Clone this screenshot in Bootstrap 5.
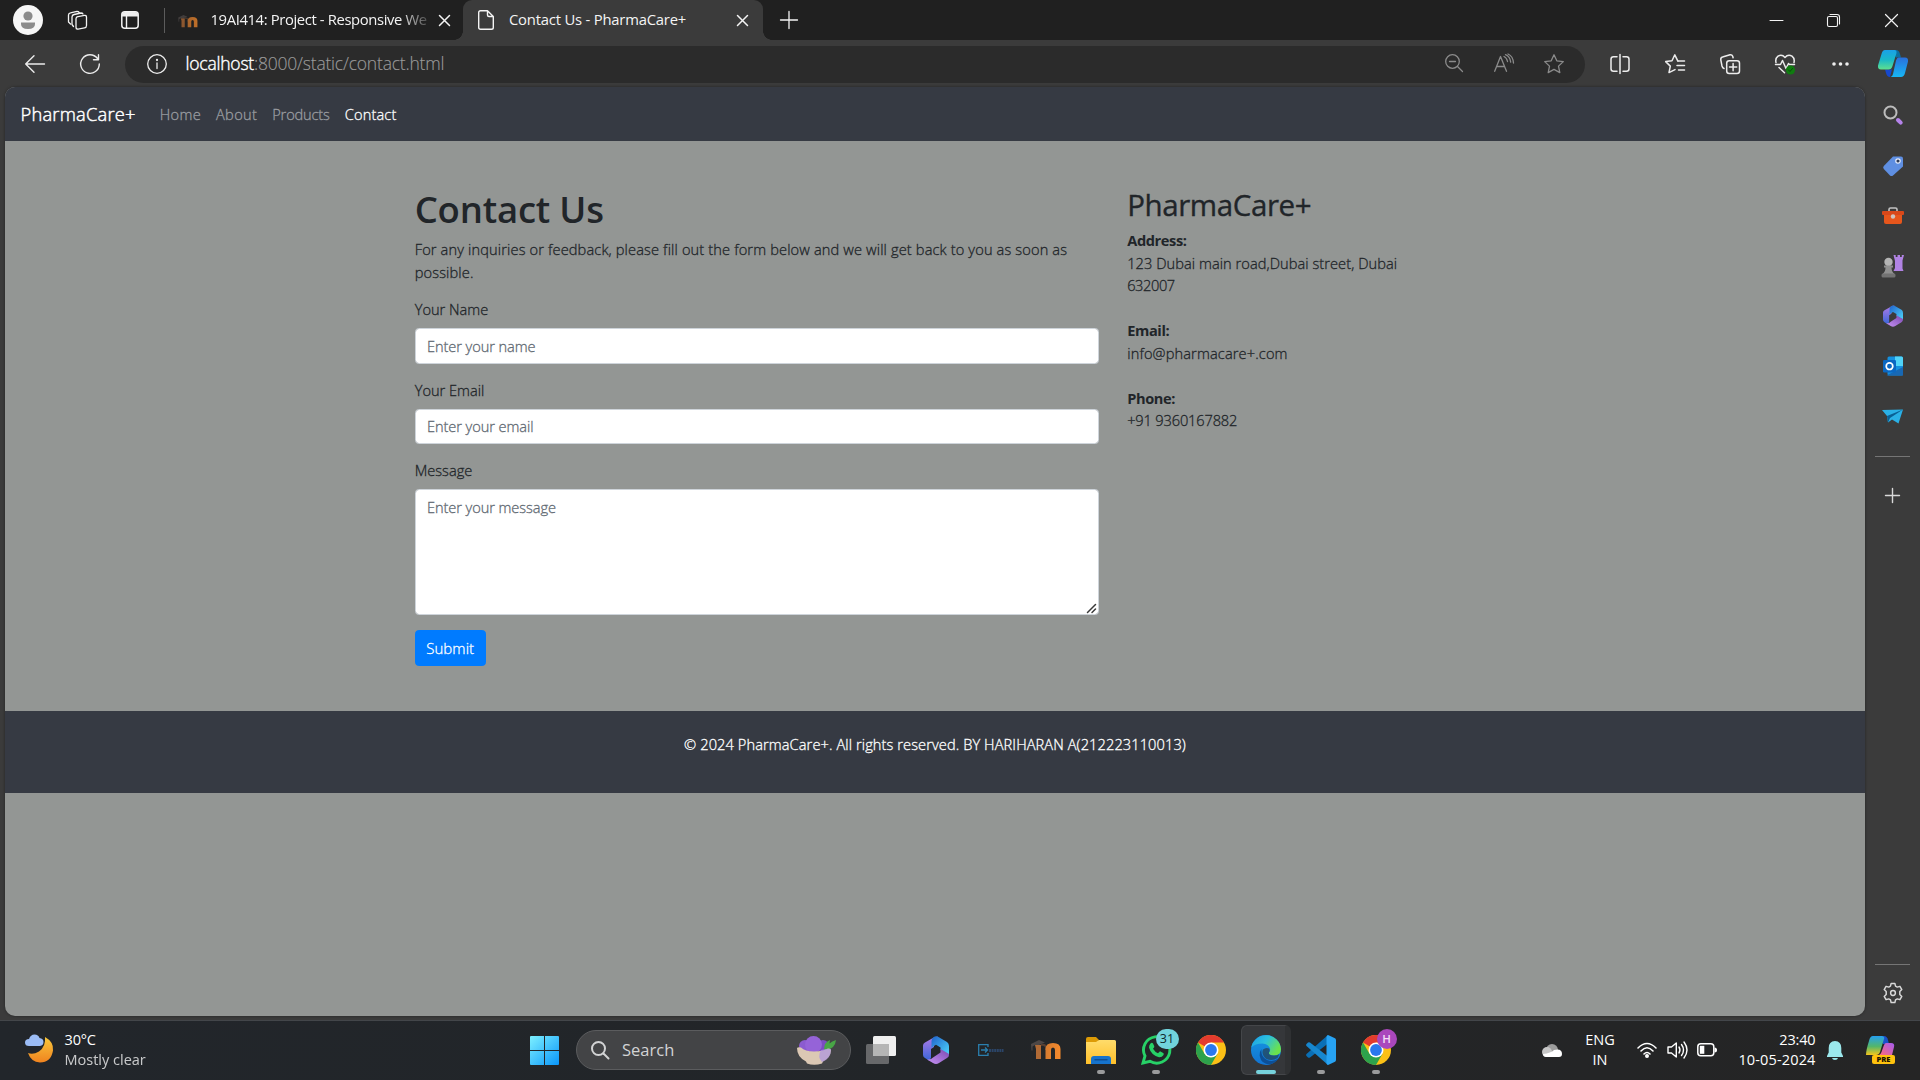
<!DOCTYPE html>
<html lang="en">
<head>
<meta charset="utf-8">
<title>Contact Us - PharmaCare+</title>
<link href="https://cdn.jsdelivr.net/npm/bootstrap@5.3.0/dist/css/bootstrap.min.css" rel="stylesheet">
<style>
html{font-size:15px}
body{font-family:"Open Sans","Noto Sans",sans-serif;width:1920px;height:1080px;overflow:hidden;background:#3b3b3b;color:#212529;font-size:14.6px;line-height:22.5px}
svg{display:block;flex:none;overflow:visible}
.ln{fill:none;stroke:currentColor;stroke-linecap:round;stroke-linejoin:round}
.titlebar{height:40px;background:#202020;color:#f4f4f4}
.tabsep{width:1px;height:25px;background:#5c5c5c}
.tab-bg{width:298px;height:40px;padding-left:13px;font-size:14.8px;letter-spacing:-.37px}
.tab-on span{padding-bottom:1px}
.tab-fade{width:219px;white-space:nowrap;padding-bottom:1px;-webkit-mask-image:linear-gradient(90deg,#000 86%,transparent 102%);mask-image:linear-gradient(90deg,#000 86%,transparent 102%)}
.tab-on{width:300px;height:40px;background:#3b3b3b;border-radius:9px 9px 0 0;padding:0 15px;position:relative;font-size:14.8px;letter-spacing:-.2px}
.tab-on::before,.tab-on::after{content:"";position:absolute;bottom:0;width:9px;height:9px}
.tab-on::before{left:-9px;background:radial-gradient(circle at 0 0,transparent 8.6px,#3b3b3b 9px)}
.tab-on::after{right:-9px;background:radial-gradient(circle at 100% 0,transparent 8.6px,#3b3b3b 9px)}
.win-cell{width:57.5px}
.toolbar{height:47px;color:#ececec}
.address{width:1460px;height:37px;border-radius:19px;background:#2b2b2b;margin-top:1px}
.url{font-size:17.5px;font-weight:300;color:#9b9b9b;white-space:nowrap;letter-spacing:-.21px;-webkit-text-stroke:.12px}
.url b{font-weight:300;color:#fff;-webkit-text-stroke:.4px}
.addr-cell{width:50px;color:#8b8b8b}
.tool-cell{width:55.2px}
.work{height:929px;padding-left:5px}
.site{width:1860px;background:#939694;border-radius:10px;box-shadow:0 0 3px rgba(0,0,0,.4);overflow:hidden;font-weight:300;-webkit-text-stroke:.3px;letter-spacing:.14px}
.site strong{font-weight:700;-webkit-text-stroke:0;letter-spacing:-.38px}
.slate{background:#363a43}
.site .navbar{height:54px;padding:0 15px 0 15.5px}
.site .navbar-brand{font-size:18.3px;color:#fff;margin-right:16.5px;letter-spacing:.22px;-webkit-text-stroke:.45px}
.site .nav-link{color:#9a9da1;padding:7.5px;letter-spacing:.34px}
.site .nav-link.tight{letter-spacing:-.15px}
.site .nav-link.active{color:#fff;letter-spacing:.16px}
.site .container{max-width:1068.75px;margin-top:44.6px}
.site .container,.site .row{--bs-gutter-x:28.125px}
.site h1{font-size:36.5px;font-weight:600;line-height:43px;padding-top:2px;margin-bottom:7.5px;letter-spacing:-.2px;-webkit-text-stroke:0}
.site h2{font-size:29.5px;font-weight:400;line-height:34px;padding-top:2px;margin-bottom:7.5px;letter-spacing:-.4px;-webkit-text-stroke:.35px}
.site label{display:block;margin-bottom:7.5px;letter-spacing:0}
.site .form-control{border:1px solid #ced4da;border-radius:3.75px;padding:5.6px 11.25px;margin-bottom:15px;height:35.6px;color:#495057;font-size:14.6px;font-weight:300;line-height:22.5px;letter-spacing:-.07px}
.site .form-control::placeholder{color:#5f6972}
.site textarea.form-control{height:125.6px;resize:none}
.grip{position:absolute;right:3px;bottom:2px}
.site .btn{background:#007bff;border-color:#007bff;border-radius:3.75px;height:36px;width:71px;padding:0;font-weight:300;letter-spacing:.06px}
.site footer{height:82px;margin-top:45px;padding-top:22px;color:#fff;letter-spacing:.1px}
.tight{letter-spacing:-.15px}
.tighter{letter-spacing:-.4px}
.rail{width:55px;padding-top:3.4px;color:#d9d9d9}
.rail-cell{height:50.2px}
.rail-line{width:35px;height:1px;background:#757575}
.taskbar{height:60px;margin-top:4px;padding-bottom:1px;border-top:1px solid #43464a;background:linear-gradient(90deg,#22262b,#222528 50%,#252525);color:#fff}
.weather{width:516px;padding-left:25px}
.two-line{line-height:20px;font-size:14.5px;white-space:nowrap;padding-bottom:1px}
.start-cell{width:57px}
.search-pill{width:275px;height:40px;border-radius:20px;background:#434446;border:1px solid #5b5c5e;margin:0 2.5px 0 3px;font-size:16.5px;color:#d2d3d4}
.app{width:55px;height:58px;position:relative}
.app.running::after{content:"";position:absolute;left:23.5px;bottom:5px;width:8px;height:4px;border-radius:2px;background:#9a9b9c}
.app.current::before{content:"";position:absolute;left:2.5px;top:4px;width:50px;height:50px;border-radius:6px;background:#35373a;border:1px solid #444649;border-right-width:6px;border-right-color:#2f3133}
.app.current::after{content:"";position:absolute;left:17.5px;bottom:5px;width:20px;height:4px;border-radius:2px;background:#76d2dc}
.app svg{position:relative}
.bubble{position:absolute;top:8px;left:27px;width:23px;height:20px;border-radius:10px;background:#71d3dc;color:#10282b;font-size:12.5px;line-height:20px;text-align:center}
.bubble-h{background:#aa47bc;color:#f3dcf6;width:20px;left:28px;font-weight:600;font-size:11.5px}
.tray{padding-right:25px}
.pre{position:absolute;left:6px;top:19px;width:23px;text-align:center;font-size:7.5px;line-height:9px;font-weight:800;color:#1b1400}
</style>
</head>
<body class="d-flex flex-column">
<svg width="0" height="0" class="position-absolute">
<defs>
<linearGradient id="moo" x1="0" x2="1"><stop offset="0" stop-color="#d57b30"/><stop offset="1" stop-color="#f58a2c"/></linearGradient>
<linearGradient id="teal" x1="0" y1="0" x2="0" y2="1"><stop offset="0" stop-color="#1aa0e8"/><stop offset=".5" stop-color="#19b8c8"/><stop offset="1" stop-color="#5fe08e"/></linearGradient>
<linearGradient id="azure" x1="0" y1="0" x2="0" y2="1"><stop offset="0" stop-color="#2a6fdc"/><stop offset="1" stop-color="#17b7f5"/></linearGradient>
<linearGradient id="win" x1="0" y1="0" x2="1" y2="1"><stop offset="0" stop-color="#7df0ff"/><stop offset="1" stop-color="#0a96fa"/></linearGradient>
<linearGradient id="moon" x1="0" y1="0" x2="0" y2="1"><stop offset="0" stop-color="#f8c83c"/><stop offset="1" stop-color="#f0831f"/></linearGradient>
<linearGradient id="mA" x1="0" y1="0" x2="0" y2="1"><stop offset="0" stop-color="#b07be8"/><stop offset="1" stop-color="#3a66d8"/></linearGradient>
<linearGradient id="mB" x1="0" y1="0" x2="1" y2="1"><stop offset="0" stop-color="#1f62cc"/><stop offset="1" stop-color="#4fd6fa"/></linearGradient>
<linearGradient id="mC" x1="0" y1="1" x2="1" y2="0"><stop offset="0" stop-color="#c793f4"/><stop offset="1" stop-color="#7a48b0"/></linearGradient>
<linearGradient id="edgeT" x1="0" y1="0" x2="1" y2=".5"><stop offset="0" stop-color="#1a9ce8"/><stop offset=".5" stop-color="#2cc0dc"/><stop offset="1" stop-color="#6be24c"/></linearGradient>
<linearGradient id="edgeB" x1="0" y1="0" x2="0" y2="1"><stop offset="0" stop-color="#1697e2"/><stop offset="1" stop-color="#1273d2"/></linearGradient>
<linearGradient id="fold" x1="0" y1="0" x2="0" y2="1"><stop offset="0" stop-color="#ffdc6b"/><stop offset="1" stop-color="#ffc02a"/></linearGradient>
<linearGradient id="cpL" x1="0" y1="0" x2="0" y2="1"><stop offset="0" stop-color="#25a0f0"/><stop offset=".55" stop-color="#53b66a"/><stop offset="1" stop-color="#f4c51c"/></linearGradient>
<linearGradient id="cpR" x1="1" y1="0" x2="0" y2="1"><stop offset="0" stop-color="#a35bf0"/><stop offset="1" stop-color="#ff6a7c"/></linearGradient>
<symbol id="m365" viewBox="0 0 26 28"><path d="M9 2.500Q11 1 15 .5L11 5v6L8 13v9l-2 2.500L2 22Q0 21 0 19V9.500Q0 7.500 2 6.500z" fill="url(#mA)"/><path d="M10.500 1.200Q13-.7 15.500 1l8.500 5Q26 7.500 26 10v9l-8.500-5v-2.500L13 8.700 8.500 11.500V5Q8.500 2.500 10.500 1.200Z" fill="url(#mB)"/><path d="M26 18v1q0 2-2 3l-8 5q-3 1.800-6 0l-6-3.500q4 .5 6-2l7.500-5V13l6 3.500Q25 17 26 18z" fill="url(#mC)"/></symbol>
<symbol id="moodle" viewBox="0 0 30 20"><path d="M4 5h6v14H5V9z" fill="#b06a35"/><path d="M10 5q4-1 5 2v3" fill="none" stroke="#5a4032" stroke-width="2"/><path d="M14.500 19V9q0-6 7.500-6t7.500 6v10H24v-9q0-2.500-2-2.500T20 10v9z" fill="url(#moo)"/><path d="M0 4 8 0l6 2.500L8 5H4L1.500 6.500v4H.5z" fill="#4d4746"/></symbol>
<symbol id="chrome" viewBox="0 0 30 30"><circle cx="15" cy="15" r="15" fill="#fbc016"/><path d="M15 15 2 7.500A15 15 0 0 1 28 7.500H15z" fill="#e33b2e"/><path d="M2 7.500A15 15 0 0 0 15 30l6.500-11.300L15 15 8.500 18.700z" fill="#2da24c"/><circle cx="15" cy="15" r="7.500" fill="#fff"/><circle cx="15" cy="15" r="5.900" fill="#2a78ee"/></symbol>
</defs>
</svg>

<header class="titlebar d-flex align-items-center flex-shrink-0">
  <div class="d-flex justify-content-center" style="width:56px"><svg width="30" height="30"><circle cx="15" cy="15" r="15" fill="#f6f6f6"/><circle cx="15" cy="11" r="4.600" fill="#8b8b8b"/><path d="M8 17.500h14v1.500q0 5-7 5t-7-5z" fill="#8b8b8b"/></svg></div>
  <div class="d-flex justify-content-center" style="width:43px"><svg width="21" height="21" class="ln" stroke-width="1.300"><rect x="9" y="6" width="10.500" height="12.500" rx="2" transform="skewY(-10) translate(0 2.500)"/><path d="M6.500 16.500 5 14.500V7q0-2 2-2.500l7-1.500q1.500 0 2 1M3.500 14 1.500 12V5q0-1.800 2-2.200l6.500-1.500q1.500 0 2 1"/></svg></div>
  <div class="d-flex justify-content-center" style="width:62px"><svg width="18" height="18"><rect x=".8" y=".8" width="16.400" height="16.400" rx="3" class="ln" stroke-width="1.500"/><path d="M1 3.500Q1 1 4 1h10q3 0 3 2.500V5.500H1z" fill="#eee"/><path d="M5.500 5v12" class="ln" stroke-width="1.400"/></svg></div>
  <div class="d-flex" style="width:4px;padding-left:3px"><div class="tabsep"></div></div>
  <div class="tab-bg d-flex align-items-center"><svg width="20" height="13" class="opacity-75 mt-1"><use href="#moodle" width="20" height="13"/></svg><div class="tab-fade" style="margin-left:12.500px">19AI414: Project - Responsive We</div><svg width="11" height="11" class="ln" style="margin-left:9.500px" stroke-width="1.500"><path d="m.5.500 10 10M10.500.500l-10 10"/></svg></div>
  <div class="tab-on d-flex align-items-center"><svg width="16" height="20" class="ln" stroke-width="1.400"><path d="M2.500.700h7L15.300 6.500V17.500q0 1.800-1.800 1.800h-11Q.7 19.300.7 17.500v-15Q.7.700 2.500.700zM9.500.700V5q0 1.500 1.500 1.500h4.300"/></svg><span style="margin-left:15px">Contact Us - PharmaCare+</span><svg width="11" height="11" class="ln ms-auto" stroke-width="1.500"><path d="m.5.500 10 10M10.500.500l-10 10"/></svg></div>
  <svg width="18" height="18" class="ln" style="margin-left:17px" stroke-width="1.300"><path d="M9 .5v17M.500 9h17"/></svg>
  <div class="ms-auto d-flex align-items-center">
    <div class="win-cell d-flex justify-content-center"><svg width="13" height="13" class="ln"><path d="M0 6.500h13"/></svg></div>
    <div class="win-cell d-flex justify-content-center"><svg width="13" height="13" class="ln" stroke-width="1.100"><rect x=".5" y="2.500" width="10" height="10" rx="1.500"/><path d="M3 .5h7q2.500 0 2.500 2.500v7"/></svg></div>
    <div class="win-cell d-flex justify-content-center"><svg width="13" height="13" class="ln" stroke-width="1.200"><path d="m.5.500 12 12M12.500.500l-12 12"/></svg></div>
  </div>
</header>

<div class="toolbar d-flex align-items-center flex-shrink-0">
  <div class="d-flex justify-content-center" style="width:70px"><svg width="20" height="18" class="ln" stroke-width="1.400"><path d="M19.500 9H.7M9 .7.700 9 9 17.300"/></svg></div>
  <div class="d-flex justify-content-center" style="width:40px"><svg width="20" height="20" class="ln" stroke-width="1.400"><path d="M17.500 4.500A9.300 9.300 0 1 0 19.300 10M18.500.700v5h-5"/></svg></div>
  <div class="address d-flex align-items-center" style="margin-left:15px">
    <svg width="20" height="20" class="ln" style="margin-left:22px" stroke-width="1.300"><circle cx="10" cy="10" r="9.300"/><path d="M10 9v5.500"/><circle cx="10" cy="6" r=".5"/></svg>
    <span class="url" style="margin-left:18.500px;padding-bottom:1px"><b>localhost</b>:8000/static/contact.html</span>
    <div class="ms-auto d-flex" style="padding-right:6px">
      <div class="addr-cell d-flex justify-content-center"><svg width="18" height="18" class="ln" stroke-width="1.300"><circle cx="7.500" cy="7.500" r="6.800"/><path d="m12.500 12.500 5 5M4.500 7.500h6"/></svg></div>
      <div class="addr-cell d-flex justify-content-center"><svg width="20" height="18" class="ln" stroke-width="1.300"><path d="M.7 17.300 6.500 2.500l6 14.800M2.700 12.500h7.800M10 2.500q3 1.500 3.500 5M11.500.700q4.500 1.800 5.200 7.500M14 .0q5 2 5.500 9"/></svg></div>
      <div class="addr-cell d-flex justify-content-center"><svg width="20" height="20" class="ln" stroke-width="1.300"><path d="m10 .8 2.800 6 6.500.8-4.800 4.500 1.300 6.500L10 15.400l-5.800 3.200 1.300-6.500L.7 7.600l6.500-.8z"/></svg></div>
    </div>
  </div>
  <div class="d-flex align-items-center" style="margin-left:7px">
    <div class="tool-cell d-flex justify-content-center"><svg width="20" height="20" class="ln" stroke-width="1.500"><path d="M7 2.800H3.500Q1 2.800 1 5.300v9.400q0 2.500 2.500 2.500H7M10 .500v19M13 2.800h3.500q2.500 0 2.500 2.500v9.400q0 2.500-2.500 2.500H13"/></svg></div>
    <div class="tool-cell d-flex justify-content-center"><svg width="20" height="20" class="ln" stroke-width="1.500"><path d="M13 7.300 9.800.800 7 6.800l-6.300.8 4.600 4.500L4 18.600l6-3M13.500 7H19.500M12 11.500h7.500M13.500 16h6"/></svg></div>
    <div class="tool-cell d-flex justify-content-center"><svg width="20" height="20" class="ln" stroke-width="1.500"><rect x="6.700" y="6.700" width="12.800" height="12.800" rx="2.500"/><path d="M13.100 9.500v7.200M9.500 13.100h7.200M4 14.500Q2.500 14 2 12L.800 5.800Q.500 3.500 2.500 3L10 .8q2-.3 2.700 1.500l.4 1.500"/></svg></div>
    <div class="tool-cell d-flex justify-content-center"><svg width="20" height="20"><path class="ln" stroke-width="1.500" d="M1 8.500Q0 4.500 3 2.200q4-2.200 7 1.300 3-3.500 7-1.300 3 2.300 2 6.300M.5 10.500h5l2-4 3.500 8 2.500-5 1 1h5M4 13.500l5.500 5.300"/><circle cx="15.500" cy="16" r="4.600" fill="#107c10"/><path d="m13.500 16 1.500 1.500 2.500-3" class="ln" style="stroke:#0a4f0a"/></svg></div>
    <div class="tool-cell d-flex justify-content-center"><svg width="17" height="4"><circle cx="2" cy="2" r="1.800" fill="#eee"/><circle cx="8.500" cy="2" r="1.800" fill="#eee"/><circle cx="15" cy="2" r="1.800" fill="#eee"/></svg></div>
    <div class="d-flex justify-content-center" style="width:50px"><svg width="30" height="27"><path d="M14 0h4q3 0 4 4l1 3.500h-5z" fill="#0b6ea0"/><path d="M7 19.500h7L12 27q-3 0-4-4z" fill="#1648cc"/><path d="M7 0h10q2 .5 1.500 3L14.500 16q-1 3.500-4 3.500H3Q-.5 19.500 0 15.500L3.500 4Q4.500 0 7 0z" fill="url(#teal)"/><path d="M20.500 7.500H27q3.500 0 3 4L27 23q-1 4-4 4H12.500q2-.5 2.500-3L18 10.500q1-3 2.500-3z" fill="url(#azure)"/></svg></div>
  </div>
</div>

<main class="work d-flex flex-shrink-0">
  <div class="site">
    <nav class="navbar slate d-flex flex-nowrap justify-content-start">
      <a class="navbar-brand">PharmaCare+</a>
      <a class="nav-link">Home</a>
      <a class="nav-link">About</a>
      <a class="nav-link tight">Products</a>
      <a class="nav-link active">Contact</a>
    </nav>
    <div class="container">
      <div class="row">
        <div class="col-8">
          <h1>Contact Us</h1>
          <p class="mb-3">For any inquiries or feedback, please fill out the form below and we will get back to you as soon as<br>possible.</p>
          <form>
            <label for="name">Your Name</label>
            <input id="name" class="form-control" placeholder="Enter your name">
            <label for="email">Your Email</label>
            <input id="email" class="form-control" placeholder="Enter your email">
            <label for="message">Message</label>
            <div class="position-relative"><textarea id="message" class="form-control" rows="5" placeholder="Enter your message"></textarea><svg class="grip ln" width="9" height="9"><path d="M.500 8.500l8-8M5 8.500 8.500 5" stroke="#3a3a3a" stroke-width="1.500"/></svg></div>
            <button type="button" class="btn btn-primary d-block">Submit</button>
          </form>
        </div>
        <div class="col-4">
          <h2>PharmaCare+</h2>
          <p><strong>Address:</strong><br><span style="letter-spacing:.06px">123 Dubai main road,Dubai street, Dubai</span><br><span class="tighter">632007</span></p>
          <p class="mt-4"><strong>Email:</strong><br>info@pharmacare+.com</p>
          <p class="mt-4"><strong>Phone:</strong><br><span class="tight">+91 9360167882</span></p>
        </div>
      </div>
    </div>
    <footer class="slate text-center">© 2024 PharmaCare+. All rights reserved. BY HARIHARAN A(212223110013)</footer>
  </div>
  <aside class="rail d-flex flex-column align-items-center">
    <div class="rail-cell d-flex align-items-center"><svg width="20" height="20"><circle cx="7.500" cy="7.500" r="6" fill="none" stroke="#bcbcbc" stroke-width="2"/><path d="m15 15 2.700 2.700" stroke="#b583ea" stroke-width="4" stroke-linecap="round"/></svg></div>
    <div class="rail-cell d-flex align-items-center"><svg width="20" height="20"><path d="M10 .5h8q2 0 2 2v8L10 19.500q-1.500 1-3 0L.8 13q-1.300-1.500 0-3z" fill="#5f8fe2"/><circle cx="15" cy="5" r="2.200" fill="#2e3c58" stroke="#e8eefc" stroke-width="1.200"/></svg></div>
    <div class="rail-cell d-flex align-items-center"><svg width="22" height="17"><path d="M7 4V2.500Q7 1 8.500 1h5Q15 1 15 2.500V4" fill="none" stroke="#c2c2c2" stroke-width="1.600"/><path d="M2 7h18v8q0 2-2 2H4q-2 0-2-2z" fill="#e6561c"/><rect y="4" width="22" height="4" rx="1" fill="#d8481a"/><circle cx="11" cy="9.500" r="2.200" fill="#cfc4bf"/></svg></div>
    <div class="rail-cell d-flex align-items-center"><svg width="23" height="23"><path d="M12.500 0h2.200v2h1.800V0h2.500v2h1.800V0H23l-1.500 5.500v8l1 2.500H12.500l1.500-3V6z" fill="#b183e4"/><circle cx="7.500" cy="7" r="4.200" fill="#b4b4b4"/><path d="M3 10.500h9v2H10.500q0 4 3 6.500h-12q3-2.500 3-6.500H3z" fill="#909090"/><rect x=".5" y="18.500" width="14" height="4" rx="1.500" fill="#737373"/></svg></div>
    <div class="rail-cell d-flex align-items-center"><svg width="20" height="22"><use href="#m365" width="20" height="22"/></svg></div>
    <div class="rail-cell d-flex align-items-center"><svg width="20" height="20"><rect x="4.500" y=".5" width="15.500" height="19" rx="1.500" fill="#1490df"/><path d="M12 .5h6.500q1.500 0 1.500 1.500v8h-8z" fill="#50d3f8"/><path d="m3.500 19.500 16.500-8.500v8.500z" fill="#1868b4"/><rect y="4" width="13" height="12.500" rx="1.200" fill="#0a67c2"/><circle cx="6.500" cy="10.200" r="3.300" fill="none" stroke="#fff" stroke-width="1.700"/></svg></div>
    <div class="rail-cell d-flex align-items-center"><svg width="21" height="15"><path d="M0 1 21 .500 16.500 14.500 10 10.500 6 13.500 5 7z" fill="#2ab0e6"/><path d="M5 7 21 .5 8 9l-2 4.500z" fill="#0a5f94"/></svg></div>
    <div class="rail-line" style="margin-top:14px"></div>
    <svg width="15" height="15" class="ln" style="margin-top:31.500px" stroke-width="1.400"><path d="M7.500.500v14M.500 7.500h14"/></svg>
    <div class="rail-line mt-auto"></div>
    <svg width="22" height="22" class="ln" style="margin:16.500px 0 12.500px" viewBox="0 0 16 16"><g transform="translate(8 8) scale(.97) translate(-8 -8)" stroke-width="1.100"><circle cx="8" cy="8" r="1.800"/><path d="M6.600.800h2.800l.5 2.100 1.300.7 2-.6 1.400 2.400-1.500 1.500v2.200l1.500 1.500-1.400 2.400-2-.6-1.300.7-.5 2.100H6.600l-.5-2.100-1.300-.7-2 .6-1.400-2.400L2.900 9.100V6.900L1.400 5.400 2.800 3l2 .6 1.300-.7z"/></g></svg>
  </aside>
</main>

<footer class="taskbar d-flex align-items-center flex-shrink-0">
  <div class="weather d-flex align-items-center">
    <svg width="28" height="30" style="margin-bottom:3px"><path d="M20 3q9 5 8 13.500Q26 28.500 15 28.500 6 28 3 19q5 2 11-1.500 7-5 6-14.500z" fill="url(#moon)"/><path d="M4 12Q0 12 0 8.500T4 5Q5.500.500 9.500.500T14.500 4Q18.500 4.500 18.500 8t-3.500 4z" fill="#9bbcf5"/></svg>
    <div class="two-line" style="margin-left:11.500px"><span class="tight">30°C</span><br><span class="opacity-75">Mostly clear</span></div>
  </div>
  <div class="start-cell d-flex justify-content-center"><svg width="29" height="29"><path d="M1 0h13v14H0V1Q0 0 1 0zM15 0h13q1 0 1 1v13H15zM0 15h14v14H1q-1 0-1-1zM15 15h14v13q0 1-1 1H15z" fill="url(#win)"/></svg></div>
  <div class="search-pill d-flex align-items-center">
    <svg width="18" height="18" class="ln" style="margin-left:14px" stroke-width="2"><circle cx="7.500" cy="7.500" r="6.500"/><path d="m12.500 12.500 5 5"/></svg>
    <span style="margin-left:13px">Search</span>
    <svg width="39" height="29" class="ms-auto" style="margin-right:14px"><circle cx="8" cy="10" r="6" fill="#8b5bd0"/><circle cx="26" cy="10" r="6" fill="#7a4cc0"/><circle cx="16.500" cy="8.500" r="8.500" fill="#9563d8"/><path d="M27 14q0-8 6-10-.5 8-6 10zm2 0q2-8 10-10-1 9-10 10z" fill="#48a546"/><path d="M0 12q1-1 4-.500 4 4 13 4t14-3q3 0 3 2-.5 7-8 11l-1 2q-8 2.500-15 0l-1-2Q0 21 0 12z" fill="#dcc8b4"/><path d="M24 14q9-2 10-1 0 10-9 13-5-5-1-12z" fill="#ab93e0" opacity=".7"/></svg>
  </div>
  <div class="app d-flex align-items-center justify-content-center"><svg width="30" height="28"><rect y="8" width="23" height="20" rx="1.500" fill="#67686a"/><rect x="7" width="23" height="20" rx="1.500" fill="#efefef"/><path d="M7 8h16v12H8.500Q7 20 7 18.500z" fill="#b5b5b5"/></svg></div>
  <div class="app d-flex align-items-center justify-content-center"><svg width="26" height="28"><use href="#m365" width="26" height="28"/></svg></div>
  <div class="app d-flex align-items-center justify-content-center"><svg width="26" height="12"><path d="M10 3V.7H.700v10.600H10V9M3 6h6.500M7 3.500 9.500 6 7 8.500" fill="none" stroke="#2a7fae" stroke-width="1.300"/><path d="M11 6.500h14.500" stroke="#2b4568" stroke-width="3" stroke-dasharray="2 .6"/></svg></div>
  <div class="app d-flex align-items-center justify-content-center"><svg width="30" height="20"><use href="#moodle" width="30" height="20"/></svg></div>
  <div class="app running d-flex align-items-center justify-content-center"><svg width="30" height="27"><path d="M0 2Q0 0 2 0h8l3 3-2 4H0z" fill="#dd9b06"/><path d="M0 5h10l3-2h15.500Q30 3 30 4.500V27H0z" fill="url(#fold)"/><path d="M5 27v-5q0-3 3-3h14q3 0 3 3v5z" fill="#1673cc"/><path d="M9 22.700h12" stroke="#0e4f93" stroke-width="1.400" stroke-linecap="round"/></svg></div>
  <div class="app running d-flex align-items-center justify-content-center"><svg width="30" height="30"><path d="M2 28l2-7A13.200 13.200 0 1 1 9 26.300z" fill="none" stroke="#27d167" stroke-width="2.900"/><path d="M9.500 8.500q1.500-1.500 2.500 0l1.300 2.800q.2 1-1.300 2.500 2 3.300 5 4.500l2-2 3.200 1.600q1 .6.300 2.100-1.500 2.500-4.500 2.300Q10 20 8 12.500q0-2.500 1.500-4z" fill="#27d167"/></svg><span class="bubble">31</span></div>
  <div class="app d-flex align-items-center justify-content-center"><svg width="30" height="30"><use href="#chrome" width="30" height="30"/></svg></div>
  <div class="app current d-flex align-items-center justify-content-center"><svg width="30" height="30"><circle cx="15" cy="15" r="15" fill="url(#edgeB)"/><path d="M.3 12.500A15 15 0 0 1 30 14q0 6.500-7 6.500-5.500 0-5-3 1.500-1.500 1-4Q17.500 9 11.500 8.500 4 8.500.3 12.500z" fill="url(#edgeT)"/><path d="M10.500 14q-1 8 5.500 11 6 2.500 11.500-1.500A15 15 0 0 1 19 29.500Q10 29 8.700 21q-.2-4.500 1.800-7z" fill="#0d4f96"/><path d="M18 17.500q-.5 3 5 3 3.500 0 5-1.500-.3 2.500-1.500 4-5 3.500-11 1Q10 20 12 14.500 15 12 18 13.500q1.300 2 0 4z" fill="#25445a" opacity=".75"/></svg></div>
  <div class="app running d-flex align-items-center justify-content-center"><svg width="30" height="30"><path d="M22 0v8.500L4 22.500q-1 .7-2 0L.5 21q-1-1 0-2z" fill="#0a6fb5"/><path d="M22 30v-8.500L4 7.500q-1-.7-2 0L.5 9q-1 1 0 2z" fill="#1787cf"/><path d="M22 0 28.500 3Q30 3.700 30 5v20q0 1.300-1.500 2L22 30q-1.500-.5-1.500-2V2Q20.500.500 22 0z" fill="#27a3f3"/></svg></div>
  <div class="app running d-flex align-items-center justify-content-center"><svg width="30" height="30"><use href="#chrome" width="30" height="30"/></svg><span class="bubble bubble-h">H</span></div>
  <div class="tray ms-auto d-flex align-items-center">
    <svg width="20" height="13" style="margin-right:22px"><circle cx="10" cy="6" r="6" fill="#9c9c9c"/><circle cx="5" cy="8" r="5" fill="#c6c6c6"/><path d="M1 10q8-1 11-4 8-2 8 4 0 3-3 3H4q-3 0-3-3z" fill="#fff"/></svg>
    <div class="two-line text-center" style="width:32px">ENG<br>IN</div>
    <svg width="20" height="16" class="ln" style="margin-left:20.500px" stroke-width="1.600"><path d="M1 6q9-9 18 0M4 9q6-6.500 12 0M7 12q3-3 6 0"/><circle cx="10" cy="14" r="1.200" fill="#fff"/></svg>
    <svg width="21" height="18" class="ln" style="margin-left:10px" stroke-width="1.400"><path d="M1 6h3.500L9.300 2v14L4.500 12H1zM12 6q2 3 0 6M14.500 3.500q4 5.500 0 11M17 1q6 8 0 16"/></svg>
    <svg width="21" height="14" style="margin-left:9px"><rect x=".8" y=".8" width="16" height="12" rx="3" class="ln" stroke-width="1.500"/><rect x="2.800" y="2.800" width="4.500" height="8" fill="#fff"/><path d="M17.500 4.500q2.500 0 2.500 2.500t-2.500 2.500z" fill="#fff"/></svg>
    <div class="two-line text-end" style="margin-left:20px;width:78px"><span class="tight">23:40</span><br><span style="letter-spacing:.14px">10-05-2024</span></div>
    <svg width="16" height="19" style="margin:0 23px 0 11.500px"><path d="M8 0Q14.300.3 14.300 7v4.500L16 15v1H0v-1l1.700-3.500V7Q1.700.3 8 0zM5 17h6q-.5 2-3 2t-3-2z" fill="#9be8ec"/></svg>
    <div class="position-relative"><svg width="29" height="28"><path d="M13 0h5q3 0 4 4l1 4h-6z" fill="#1a50c8"/><path d="M7 0h9q3 .5 2 3l-4 13q-1 3-4 3H0Q0 14 3 5q1-5 4-5z" fill="url(#cpL)"/><path d="M20 7h5q4 0 3 4l-2 8H13q2-1 2.500-3L18 9q1-2 2-2z" fill="url(#cpR)"/><rect x="6" y="19" width="23" height="9" rx="2" fill="#ffc20e"/></svg><span class="pre">PRE</span></div>
  </div>
</footer>
<script src="https://cdn.jsdelivr.net/npm/bootstrap@5.3.0/dist/js/bootstrap.bundle.min.js"></script>
</body>
</html>
